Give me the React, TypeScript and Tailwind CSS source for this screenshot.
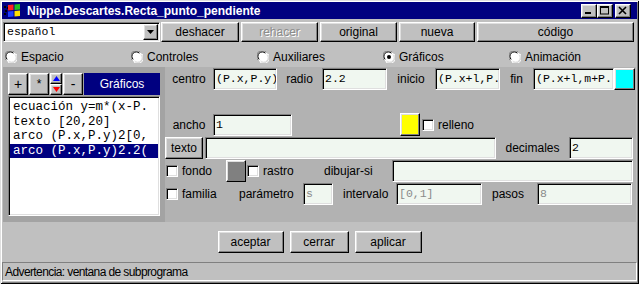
import React from "react";

const SANS = "font-['Liberation_Sans',Arial,sans-serif]";
const MONO = "font-['Liberation_Mono','Courier_New',monospace]";
const RAISED =
  "border border-t-white border-l-white border-b-black border-r-black shadow-[inset_-1px_-1px_0_#808080,inset_1px_1px_0_#dfdfdf]";
const SUNKEN =
  "border border-t-[#808080] border-l-[#808080] border-b-white border-r-white shadow-[inset_1px_1px_0_#000,inset_-1px_-1px_0_#dfdfdf]";

function Btn({
  children,
  className = "",
  disabled = false,
}: {
  children?: React.ReactNode;
  className?: string;
  disabled?: boolean;
}) {
  return (
    <div
      className={`bg-[#c0c0c0] ${RAISED} flex items-center justify-center h-full ${
        disabled ? "text-[#8c8c8c] [text-shadow:1px_1px_0_#fff]" : "text-black"
      } ${className}`}
    >
      {children}
    </div>
  );
}

function Input({
  value = "",
  className = "",
  dim = false,
}: {
  value?: string;
  className?: string;
  dim?: boolean;
}) {
  return (
    <div
      className={`bg-[#f0f7f0] ${SUNKEN} h-[22px] flex items-center pl-[2px] overflow-hidden whitespace-nowrap ${MONO} text-[11.5px] ${
        dim ? "text-[#8a8a8a]" : "text-black"
      } ${className}`}
    >
      {value}
    </div>
  );
}

function Check({ className = "" }: { className?: string }) {
  return <div className={`w-[12px] h-[12px] bg-white ${SUNKEN} shrink-0 ${className}`} />;
}

function Radio({ checked = false }: { checked?: boolean }) {
  return (
    <svg width="12" height="12" viewBox="0 0 12 12" className="shrink-0">
      <circle cx="6" cy="6" r="5.5" fill="#fff" />
      <path d="M1.2 9.2 A5.5 5.5 0 0 1 9.2 1.2" fill="none" stroke="#808080" strokeWidth="1" />
      <path d="M2.2 8.4 A4.3 4.3 0 0 1 8.4 2.2" fill="none" stroke="#000" strokeWidth="1" />
      <path d="M10.8 2.8 A5.5 5.5 0 0 1 2.8 10.8" fill="none" stroke="#fff" strokeWidth="1" />
      <path d="M9.8 3.6 A4.3 4.3 0 0 1 3.6 9.8" fill="none" stroke="#dfdfdf" strokeWidth="1" />
      {checked && <circle cx="6" cy="6" r="2" fill="#000" />}
    </svg>
  );
}

function RadioItem({ label, checked = false }: { label: string; checked?: boolean }) {
  return (
    <div className="flex items-center gap-[4px] h-[13px]">
      <Radio checked={checked} />
      <span className="leading-none">{label}</span>
    </div>
  );
}

function WinIcon() {
  return (
    <svg width="17" height="13" viewBox="0 0 17 13" className="shrink-0">
      <rect x="0" y="2" width="2" height="2" fill="#000" />
      <rect x="1" y="6" width="2" height="2" fill="#000" />
      <rect x="0" y="9" width="2" height="2" fill="#000" />
      <rect x="3" y="3" width="1" height="2" fill="#000" />
      <path d="M4 1 L9.5 0.5 L9.5 6 L4 6.5 Z" fill="#ff2020" />
      <path d="M10.5 0.5 L16 0 L16 5.5 L10.5 6 Z" fill="#20c020" />
      <path d="M4 7.5 L9.5 7 L9.5 12.5 L4 13 Z" fill="#2040ff" />
      <path d="M10.5 7 L16 6.5 L16 12 L10.5 12.5 Z" fill="#ffe000" />
    </svg>
  );
}

function TitleBtn({ kind }: { kind: "min" | "max" | "close" }) {
  return (
    <div className={`w-[16px] h-[14px] bg-[#c0c0c0] ${RAISED} flex items-center justify-center`}>
      <svg width="10" height="9" viewBox="0 0 10 9">
        {kind === "min" && <rect x="1" y="6" width="6" height="2" fill="#000" />}
        {kind === "max" && (
          <>
            <rect x="0.5" y="0.5" width="8" height="7.5" fill="none" stroke="#000" />
            <rect x="0" y="0" width="9" height="2" fill="#000" />
          </>
        )}
        {kind === "close" && (
          <path d="M1 1 L8 8 M8 1 L1 8" stroke="#000" strokeWidth="1.6" />
        )}
      </svg>
    </div>
  );
}

export default function App() {
  return (
    <div
      className={`w-[639px] h-[284px] bg-[#c0c0c0] p-[2px] flex flex-col overflow-hidden ${SANS} text-[12px] text-black shadow-[inset_1px_1px_0_#dfdfdf,inset_-1px_-1px_0_#000,inset_2px_2px_0_#fff,inset_-2px_-2px_0_#808080]`}
    >
      {/* Title bar */}
      <div className="h-[17px] bg-[#000080] flex items-center pl-[2px] pr-[6px] shrink-0">
        <WinIcon />
        <span className="ml-[6px] text-white font-bold text-[12px] leading-none flex-1">
          Nippe.Descartes.Recta_punto_pendiente
        </span>
        <div className="flex items-center">
          <TitleBtn kind="min" />
          <TitleBtn kind="max" />
          <div className="ml-[2px]">
            <TitleBtn kind="close" />
          </div>
        </div>
      </div>

      {/* Toolbar row */}
      <div className="mt-[3px] h-[20px] flex shrink-0">
        <div className={`ml-[1px] w-[157px] h-full bg-white ${SUNKEN} flex items-center p-[1px]`}>
          <span className={`flex-1 pl-[2px] ${MONO} text-[11.5px]`}>español</span>
          <div className={`w-[15px] h-[16px] bg-[#c0c0c0] ${RAISED} flex items-center justify-center`}>
            <svg width="7" height="4" viewBox="0 0 7 4">
              <path d="M0 0 L7 0 L3.5 4 Z" fill="#000" />
            </svg>
          </div>
        </div>
        <Btn className="ml-[1px] w-[78px]">deshacer</Btn>
        <Btn className="ml-[2px] w-[77px]" disabled>
          rehacer
        </Btn>
        <Btn className="ml-[2px] w-[77px]">original</Btn>
        <Btn className="ml-[2px] w-[76px]">nueva</Btn>
        <Btn className="ml-[2px] w-[157px]">código</Btn>
      </div>

      {/* Radio row */}
      <div className="h-[25px] pt-[8px] pl-[3px] shrink-0">
        <div className="grid grid-cols-5 w-[630px]">
          <RadioItem label="Espacio" />
          <RadioItem label="Controles" />
          <RadioItem label="Auxiliares" />
          <RadioItem label="Gráficos" checked />
          <RadioItem label="Animación" />
        </div>
      </div>

      {/* Main panel */}
      <div className="h-[155px] mx-[1px] flex shrink-0">
        {/* Left list panel */}
        <div className="w-[162px] bg-[#a3a3a3] pt-[6px] pl-[5px] flex flex-col">
          <div className="h-[22px] flex">
            <Btn className="w-[20px] text-[14px]">+</Btn>
            <Btn className="ml-[1px] w-[20px] text-[12px]">*</Btn>
            <div className="ml-[1px] w-[12px] h-full flex flex-col">
              <div className={`h-[11px] bg-[#c0c0c0] ${RAISED} flex items-center justify-center`}>
                <svg width="7" height="5" viewBox="0 0 7 5">
                  <path d="M0 5 L7 5 L3.5 0 Z" fill="#0000ff" />
                </svg>
              </div>
              <div className={`h-[11px] bg-[#c0c0c0] ${RAISED} flex items-center justify-center`}>
                <svg width="7" height="5" viewBox="0 0 7 5">
                  <path d="M0 0 L7 0 L3.5 5 Z" fill="#ff0000" />
                </svg>
              </div>
            </div>
            <Btn className="ml-[1px] w-[20px] text-[14px]">-</Btn>
            <div className="ml-[1px] w-[76px] h-full bg-[#000080] text-white flex items-center justify-center text-[12px]">
              Gráficos
            </div>
          </div>
          <div className={`mt-[1px] w-[152px] h-[120px] bg-white ${SUNKEN} p-[1px]`}>
            <div className={`pt-[2px] ${MONO} text-[12.5px]`}>
              {[
                "ecuación y=m*(x-P.",
                "texto [20,20]",
                "arco (P.x,P.y)2[0,",
                "arco (P.x,P.y)2.2(",
              ].map((t, i) => (
                <div
                  key={i}
                  className={`h-[14.5px] leading-[14.5px] pl-[3px] whitespace-nowrap overflow-hidden ${
                    i === 3 ? "bg-[#000080] text-white" : "text-black"
                  }`}
                >
                  {t}
                </div>
              ))}
            </div>
          </div>
        </div>

        {/* Right form panel */}
        <div className="flex-1 bg-[#b2b2b2] pt-[1px] flex flex-col">
          {/* Row A */}
          <div className="h-[22px] flex items-center">
            <span className="w-[48px] text-center">centro</span>
            <Input className="w-[64px]" value="(P.x,P.y)" />
            <span className="w-[45px] text-center">radio</span>
            <Input className="w-[65px]" value="2.2" />
            <span className="w-[48px] text-center">inicio</span>
            <Input className="w-[65px]" value="(P.x+l,P." />
            <span className="w-[33px] text-center">fin</span>
            <Input className="w-[81px]" value="(P.x+l,m+P." />
            <div className={`w-[21px] h-[22px] bg-[#00ffff] ${RAISED}`} />
          </div>

          {/* Row B */}
          <div className="mt-[23px] h-[23px] flex items-center">
            <span className="w-[48px] text-center">ancho</span>
            <Input className="w-[79px]" value="1" />
            <div className="w-[108px]" />
            <div className={`w-[20px] h-[23px] bg-[#ffff00] ${RAISED}`} />
            <Check className="ml-[2px]" />
            <span className="ml-[4px]">relleno</span>
          </div>

          {/* Row C */}
          <div className="mt-[1px] h-[22px] flex items-center">
            <Btn className="w-[38px]">texto</Btn>
            <Input className="ml-[2px] w-[291px]" />
            <span className="w-[73px] text-center">decimales</span>
            <Input className="w-[64px]" value="2" />
          </div>

          {/* Row D */}
          <div className="mt-[1px] h-[22px] flex items-center">
            <Check className="ml-[1px]" />
            <span className="w-[48px] pl-[4px]">fondo</span>
            <div className={`w-[20px] h-[22px] bg-[#808080] ${RAISED}`} />
            <Check className="ml-[1px]" />
            <span className="w-[65px] pl-[4px]">rastro</span>
            <span className="w-[68px]">dibujar-si</span>
            <Input className="w-[241px]" />
          </div>

          {/* Row E */}
          <div className="mt-[1px] h-[22px] flex items-center">
            <Check className="ml-[1px]" />
            <span className="w-[61px] pl-[4px]">familia</span>
            <span className="w-[64px]">parámetro</span>
            <Input className="w-[30px]" value="s" dim />
            <span className="w-[63px] pl-[10px]">intervalo</span>
            <Input className="w-[86px]" value="[0,1]" dim />
            <span className="w-[55px] pl-[10px]">pasos</span>
            <Input className="w-[95px]" value="8" dim />
          </div>
        </div>
      </div>

      {/* Bottom buttons */}
      <div className="mt-[9px] h-[22px] flex justify-center shrink-0">
        <Btn className="w-[66px]">aceptar</Btn>
        <Btn className="ml-[6px] w-[59px]">cerrar</Btn>
        <Btn className="ml-[6px] w-[67px]">aplicar</Btn>
      </div>

      {/* Status bar */}
      <div className="mt-[9px] h-[19px] border border-t-[#808080] border-l-[#808080] border-b-white border-r-white flex items-center pl-[2px] shrink-0">
        <span className="text-[12px] tracking-[-0.6px]">Advertencia: ventana de subprograma</span>
      </div>
    </div>
  );
}
